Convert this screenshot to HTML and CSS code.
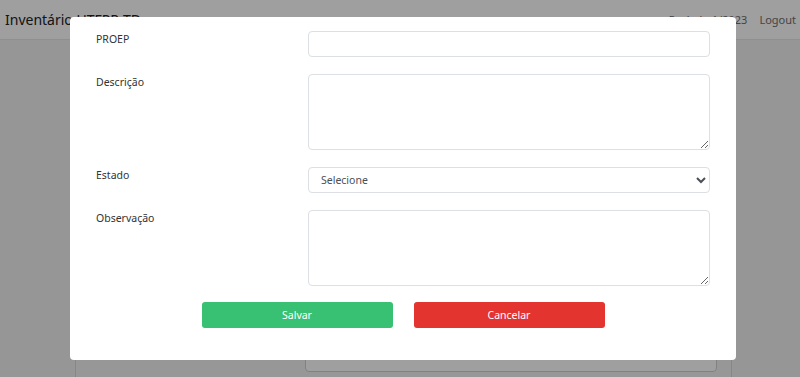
FILE: index.html
```html
<!DOCTYPE html>
<html lang="pt-BR">
<head>
<meta charset="utf-8">
<title>Inventário UTFPR-TD</title>
<link rel="stylesheet" href="styles.css">
</head>
<body>
<nav class="navbar">
  <span class="brand">Inventário UTFPR-TD</span>
  <div class="nav-right">
    <span class="nav-link">Período 1/2023</span>
    <span class="nav-link">Logout</span>
  </div>
</nav>
<main class="page">
  <div class="card">
    <div class="card-row">
      <div class="card-input"></div>
    </div>
  </div>
</main>
<div class="backdrop"></div>
<div class="modal">
  <form class="form">
    <label class="label">PROEP</label>
    <input class="control" type="text">
    <label class="label">Descrição</label>
    <textarea class="control area"></textarea>
    <label class="label">Estado</label>
    <select class="control select"><option>Selecione</option></select>
    <label class="label">Observação</label>
    <textarea class="control area"></textarea>
  </form>
  <div class="actions">
    <button class="btn btn-success" type="button">Salvar</button>
    <button class="btn btn-danger" type="button">Cancelar</button>
  </div>
</div>
</body>
</html>
```
FILE: styles.css
```css
html, body {
  margin: 0;
  padding: 0;
}
body {
  background: #f0f0f0;
  font-family: "Noto Sans", "Open Sans", sans-serif;
  color: #212529;
  height: 377px;
  overflow: hidden;
}
.navbar {
  height: 39px;
  background: #ffffff;
  border-bottom: 1px solid #e6e6e6;
  display: flex;
  align-items: center;
  justify-content: space-between;
  padding: 0 4px 0 5px;
}
.brand {
  font-size: 14px;
  color: #222;
}
.nav-right {
  display: flex;
  gap: 12px;
}
.nav-link {
  font-size: 11px;
  color: #6e6e6e;
}
.page {
  padding: 18px 68px 0 75px;
}
.card {
  background: #f3f3f3;
  border: 1px solid #d8d8d8;
  border-bottom: none;
  border-radius: 4px 4px 0 0;
  height: 319px;
  box-sizing: border-box;
  padding: 279px 14px 0 0;
}
.card-row {
  display: flex;
  justify-content: flex-end;
}
.card-input {
  width: 412px;
  height: 34px;
  background: #fff;
  border: 1px solid #cfcfcf;
  border-radius: 4px;
  box-sizing: border-box;
}
.backdrop {
  position: fixed;
  inset: 0;
  background: rgba(0, 0, 0, 0.376);
}
.modal {
  position: absolute;
  left: 70px;
  top: 17px;
  width: 666px;
  height: 343px;
  box-sizing: border-box;
  background: #ffffff;
  border-radius: 4px;
  padding: 14px 26px 0 26px;
}
.form {
  display: grid;
  grid-template-columns: 212px 1fr;
  row-gap: 17px;
  margin: 0;
}
.label {
  font-size: 10.5px;
  line-height: 17px;
  color: #333;
}
.control {
  display: block;
  box-sizing: border-box;
  width: 100%;
  height: 26px;
  margin: 0;
  border: 1px solid #dcdfe3;
  border-radius: 4px;
  background: #fff;
  font-family: inherit;
  font-size: 10.5px;
  color: #495057;
}
.area {
  height: 76px;
  resize: vertical;
}
.select {
  padding: 0 8px;
}
.actions {
  display: flex;
  justify-content: center;
  gap: 21px;
  margin-top: 16px;
}
.btn {
  width: 191px;
  height: 26px;
  border: none;
  border-radius: 3px;
  color: #fff;
  font-family: inherit;
  font-size: 10.5px;
}
.btn-success {
  background: #38c172;
}
.btn-danger {
  background: #e3342f;
}
```
